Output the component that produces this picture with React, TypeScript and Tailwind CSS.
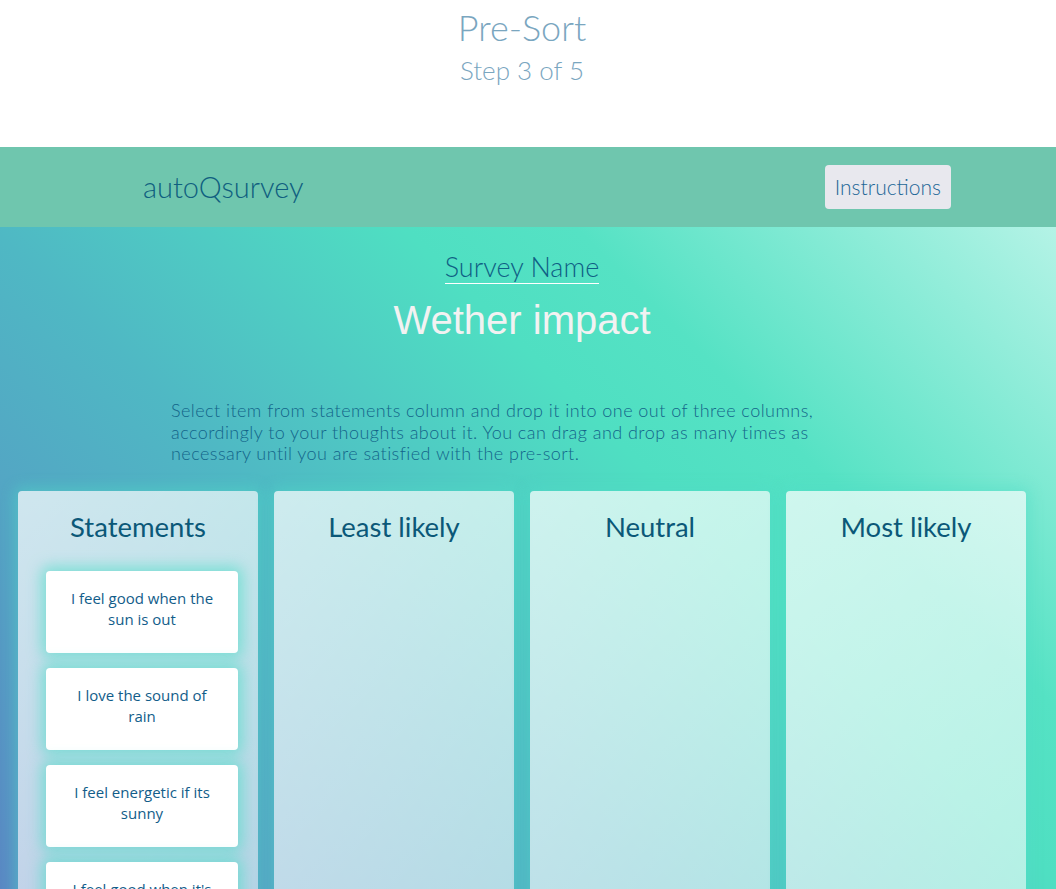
import React from "react";

const statements = [
  "I feel good when the sun is out",
  "I love the sound of rain",
  "I feel energetic if its sunny",
  "I feel good when it's snowing",
];

const columns = ["Least likely", "Neutral", "Most likely"];

function StatementCard({ text }: { text: string }) {
  return (
    <div className="w-[192px] h-[82px] shrink-0 bg-white rounded-[4px] shadow-[0_0_14px_5px_rgba(80,220,200,0.6)] flex items-start justify-center px-5 pt-[17px] text-center text-[15px] leading-[21px] text-[#125d8a] font-['Open_Sans',sans-serif]">
      {text}
    </div>
  );
}

export default function App() {
  return (
    <div className="min-h-screen bg-white font-['Lato',sans-serif] overflow-hidden">
      <header className="h-[147px] flex flex-col items-center pt-[4px] pr-[12px]">
        <h1 className="text-[36px] leading-[46px] font-light text-[#7aa6bf]">Pre-Sort</h1>
        <p className="mt-[2px] text-[26px] leading-[36px] font-light text-[#7aa6bf]">Step 3 of 5</p>
      </header>

      <nav className="h-[80px] bg-[#6fc6ae] flex items-center justify-between pl-[143px] pr-[105px]">
        <span className="text-[29px] font-light text-[#0f5f80]">autoQsurvey</span>
        <button className="h-[44px] px-[10px] rounded-[4px] bg-[#e8e8ee] text-[21px] font-light text-[#1d6797]">
          Instructions
        </button>
      </nav>

      <main className="h-[662px] bg-[linear-gradient(45deg,#5a88c4_0%,#4fb8c4_38%,#4fdfc2_62%,#55e2c4_72%,#b4f3e6_100%)] flex flex-col">
        <div className="flex flex-col items-center pt-[24px] pr-[12px]">
          <span className="text-[27px] leading-[32px] font-light text-[#0f5f85] border-b border-white">
            Survey Name
          </span>
          <h2 className="mt-[13px] text-[40px] leading-[46px] text-[#f2f2f2] font-['Liberation_Sans',sans-serif]">
            Wether impact
          </h2>
        </div>

        <p className="mt-[57px] ml-[171px] w-[680px] text-[18px] leading-[21.5px] tracking-[0.45px] font-light text-[#13658a]">
          Select item from statements column and drop it into one out of three columns,
          accordingly to your thoughts about it. You can drag and drop as many times as
          necessary until you are satisfied with the pre-sort.
        </p>

        <div className="mt-[26px] ml-[18px] flex gap-[16px]">
          <section className="w-[240px] h-[700px] shrink-0 rounded-[4px] bg-[linear-gradient(135deg,rgba(255,255,255,0.72),rgba(255,255,255,0.5))] shadow-[0_0_14px_4px_rgba(80,220,200,0.45)] flex flex-col items-center">
            <h3 className="mt-[19px] text-[27.5px] leading-[34px] text-[#0b5878]">Statements</h3>
            <div className="mt-[27px] ml-[8px] flex flex-col gap-[15px]">
              {statements.map((s) => (
                <StatementCard key={s} text={s} />
              ))}
            </div>
          </section>
          {columns.map((c) => (
            <section
              key={c}
              className="w-[240px] h-[700px] shrink-0 rounded-[4px] bg-[linear-gradient(135deg,rgba(255,255,255,0.72),rgba(255,255,255,0.5))] shadow-[0_0_14px_4px_rgba(80,220,200,0.45)] flex flex-col items-center"
            >
              <h3 className="mt-[19px] text-[27.5px] leading-[34px] text-[#0b5878]">{c}</h3>
            </section>
          ))}
        </div>
      </main>
    </div>
  );
}
